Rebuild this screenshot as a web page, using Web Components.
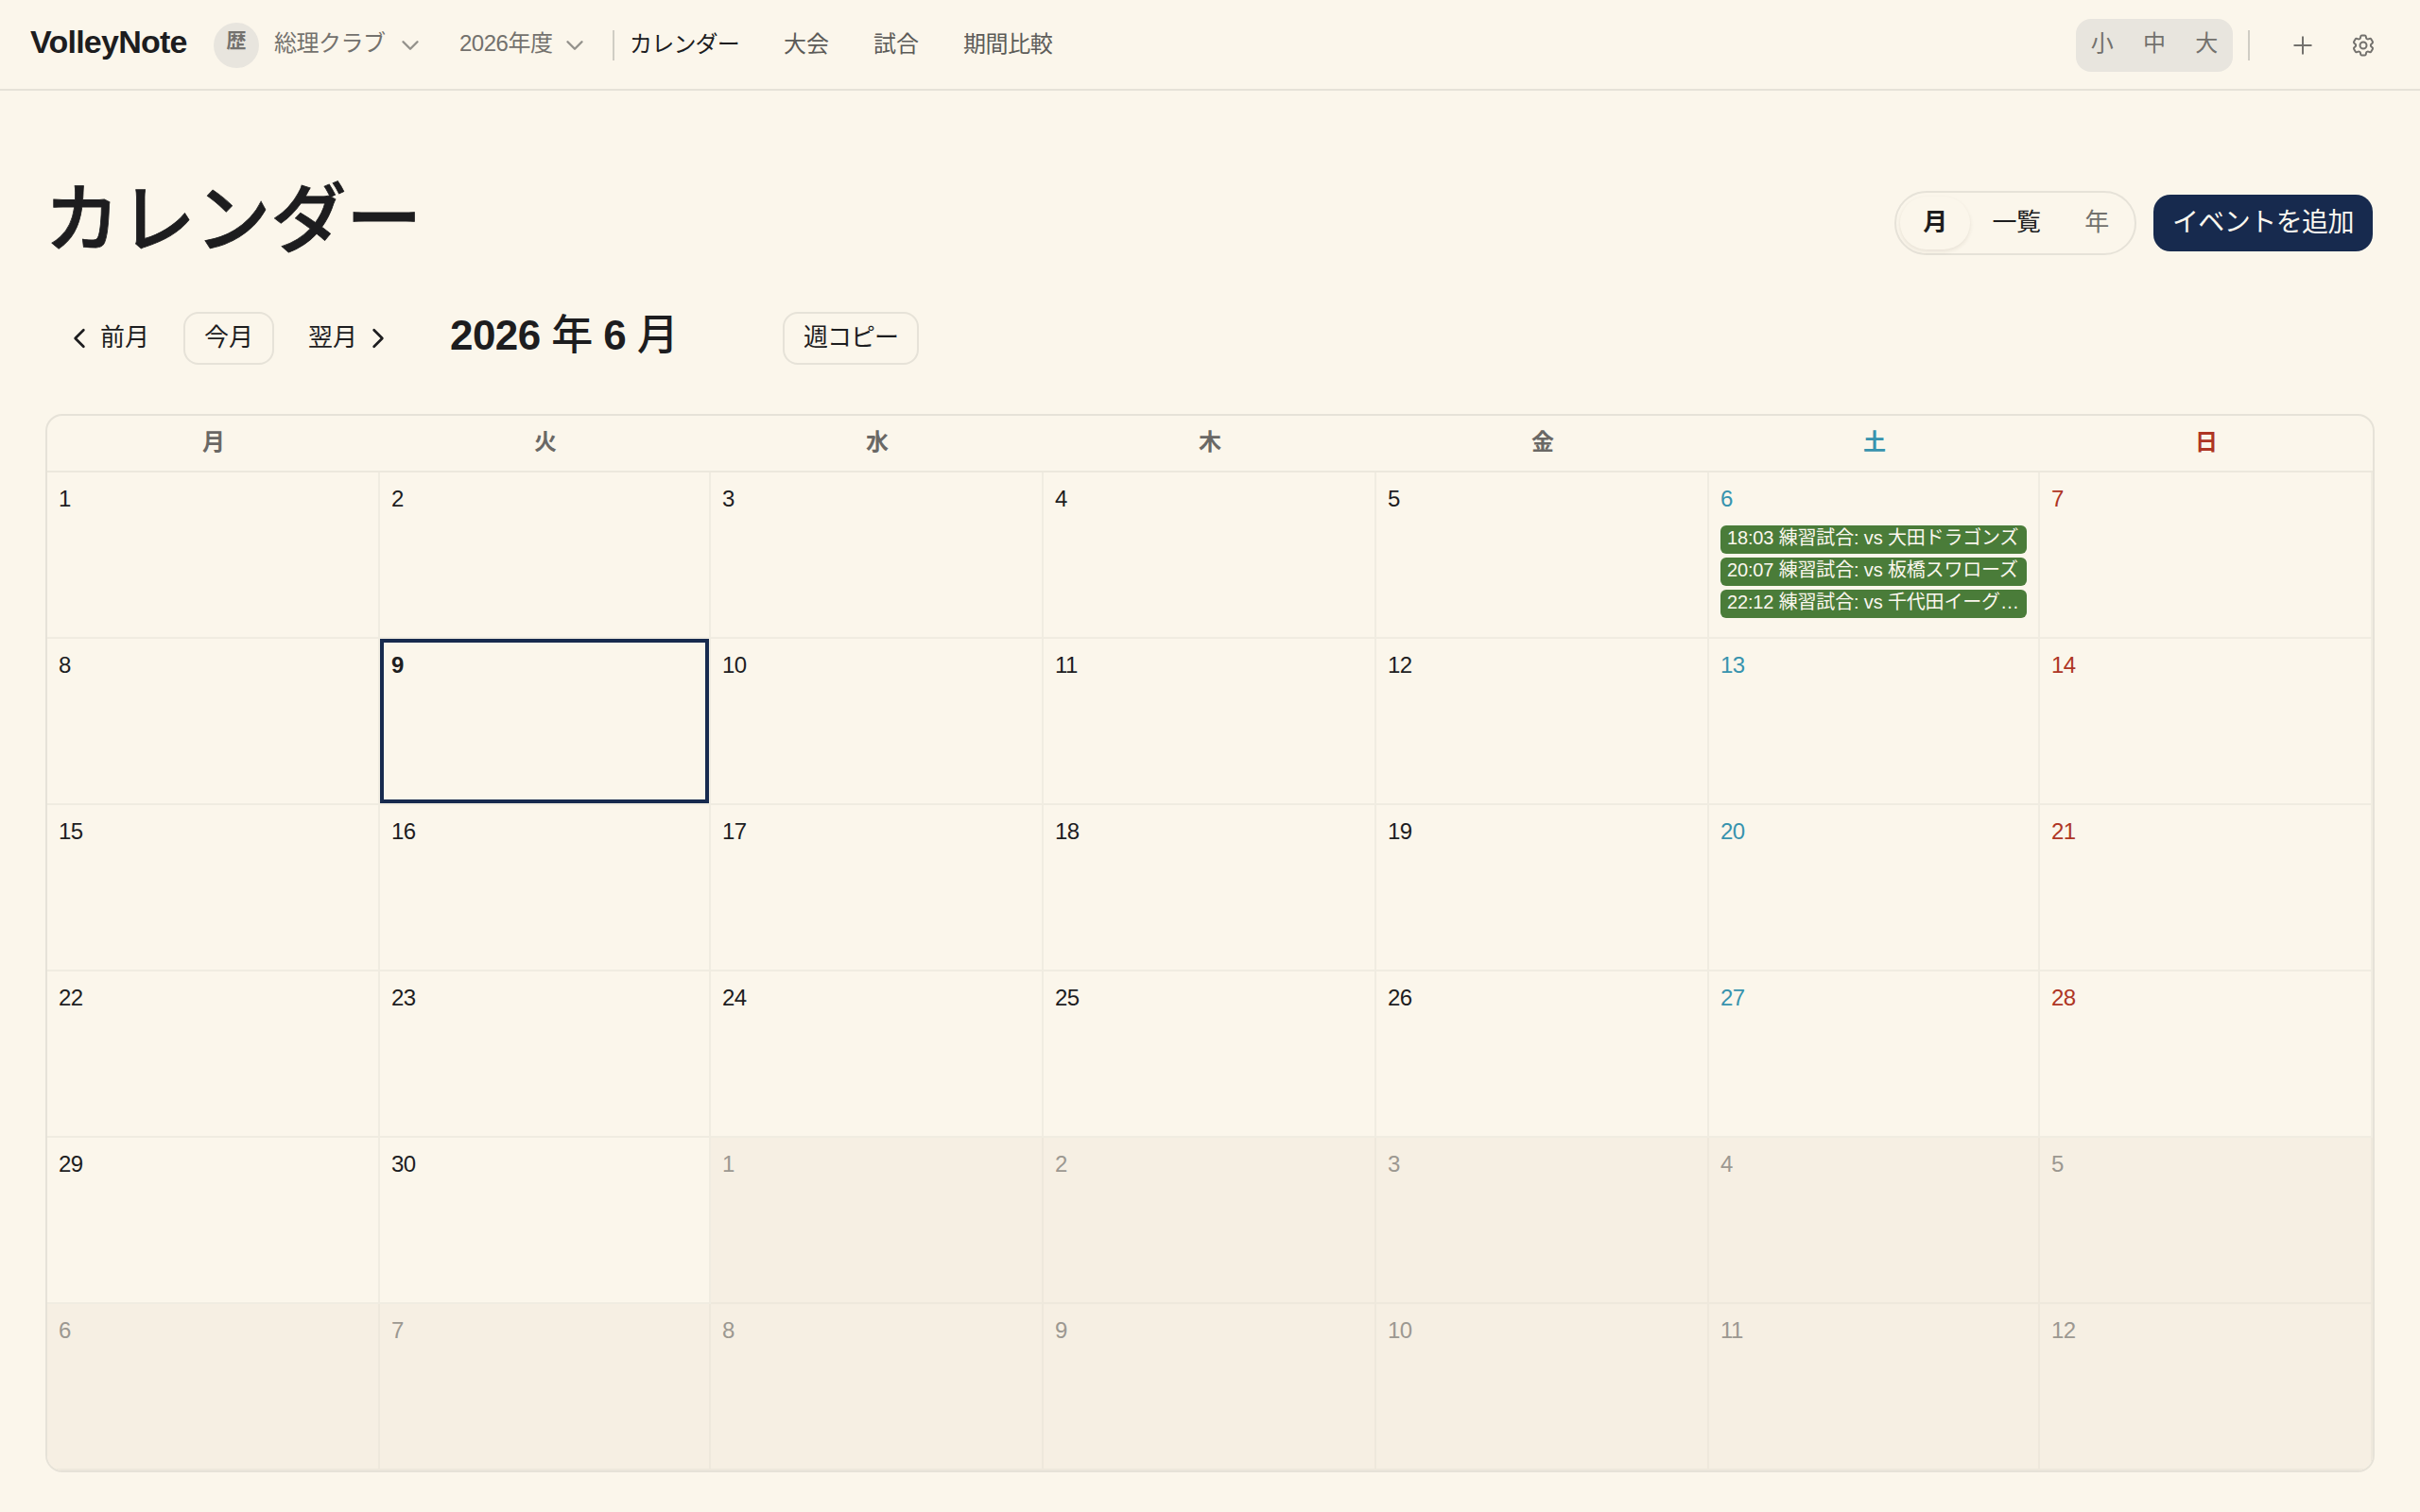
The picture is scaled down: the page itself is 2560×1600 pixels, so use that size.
<!DOCTYPE html>
<html lang="ja">
<head>
<meta charset="utf-8">
<title>VolleyNote</title>
<style>
:root {
  --bg: #fbf6eb;
  --ink: #1d1d1f;
  --ink-soft: #5c5b58;
  --ink-mute: #73716d;
  --line: #e6e2d8;
  --line-soft: #f0ece1;
  --fill: #e8e5de;
  --navy: #172a4e;
  --green: #4a7c39;
  --sat: #3793ae;
  --sun: #ae3524;
}

body {
  margin: 0;
  background: var(--bg);
  color: var(--ink);
  font-family: "Liberation Sans", "Noto Sans CJK JP", sans-serif;
  font-size: 24px;
}
</style>
</head>
<body>
<vn-app></vn-app>

<script>
const icons = {
  down: '<path d="m19.5 8.25-7.5 7.5-7.5-7.5"/>',
  left: '<path d="M15.75 19.5 8.25 12l7.5-7.5"/>',
  right: '<path d="m8.25 4.5 7.5 7.5-7.5 7.5"/>',
  plus: '<path d="M12 4.5v15m7.5-7.5h-15"/>',
  cog: '<path d="M9.594 3.94c.09-.542.56-.94 1.11-.94h2.593c.55 0 1.02.398 1.11.94l.213 1.281c.063.374.313.686.645.87.074.04.147.083.22.127.325.196.72.257 1.075.124l1.217-.456a1.125 1.125 0 0 1 1.37.49l1.296 2.247a1.125 1.125 0 0 1-.26 1.431l-1.003.827c-.293.241-.438.613-.43.992a7.723 7.723 0 0 1 0 .255c-.008.378.137.75.43.991l1.004.827c.424.35.534.955.26 1.43l-1.298 2.247a1.125 1.125 0 0 1-1.369.491l-1.217-.456c-.355-.133-.75-.072-1.076.124a6.47 6.47 0 0 1-.22.128c-.331.183-.581.495-.644.869l-.213 1.281c-.09.543-.56.94-1.11.94h-2.594c-.55 0-1.019-.398-1.11-.94l-.213-1.281c-.062-.374-.312-.686-.644-.87a6.52 6.52 0 0 1-.22-.127c-.325-.196-.72-.257-1.076-.124l-1.217.456a1.125 1.125 0 0 1-1.369-.49l-1.297-2.247a1.125 1.125 0 0 1 .26-1.431l1.004-.827c.292-.24.437-.613.43-.991a6.932 6.932 0 0 1 0-.255c.007-.38-.138-.751-.43-.992l-1.004-.827a1.125 1.125 0 0 1-.26-1.43l1.297-2.247a1.125 1.125 0 0 1 1.37-.491l1.216.456c.356.133.751.072 1.076-.124.072-.044.146-.086.22-.128.332-.183.582-.495.644-.869l.214-1.28Z"/><path d="M15 12a3 3 0 1 1-6 0 3 3 0 0 1 6 0Z"/>',
};

// Small base class: every element renders once into an open shadow root
class VNElement extends HTMLElement {
  connectedCallback() {
    if (this.shadowRoot) return;
    const tpl = document.createElement('template');
    tpl.innerHTML = this.render();
    this.attachShadow({mode: 'open'}).appendChild(tpl.content);
  }
}

customElements.define('vn-icon', class extends VNElement {
  render() {
    const size = this.getAttribute('size') || 24;
    const weight = this.getAttribute('weight') || 1.7;
    return `
<style>
  :host { display: block; flex: none; }
  svg { display: block; }
</style>
<svg width="${size}" height="${size}" viewBox="0 0 24 24" fill="none" stroke="currentColor"
  stroke-width="${weight}" stroke-linecap="round" stroke-linejoin="round">${icons[this.getAttribute('name')]}</svg>`;
  }
});

customElements.define('vn-divider', class extends VNElement {
  render() {
    return `<style>:host { display: block; width: 2px; height: 32px; background: #d0cdc4; }</style>`;
  }
});

customElements.define('vn-button', class extends VNElement {
  render() {
    return `
<style>
  :host {
    display: flex;
    align-items: center;
    gap: 8px;
    box-sizing: border-box;
    height: 56px;
    padding: 0 20px;
    border: 2px solid transparent;
    border-radius: 16px;
    font-size: 26px;
    line-height: 50px;
    white-space: nowrap;
  }
  .label { padding-bottom: 2px; }
  :host([kind=outline]) { border-color: var(--line); }
  :host([kind=primary]) {
    height: 60px;
    border: 0;
    border-radius: 18px;
    background: var(--navy);
    color: #fbf7ee;
    font-size: 28px;
    letter-spacing: -.02em;
  }
  :host([kind=primary]) .label { padding: 0; }
</style>
<slot name="before"></slot><span class="label"><slot></slot></span><slot name="after"></slot>`;
  }
});

customElements.define('vn-header', class extends VNElement {
  render() {
    return `
<style>
  :host {
    display: flex;
    align-items: center;
    height: 92px;
    padding: 2px 46px 0 32px;
    border-bottom: 2px solid var(--line);
    line-height: 1;
    white-space: nowrap;
  }
  .logo { font-size: 34px; font-weight: 700; letter-spacing: -.022em; width: 194px; padding-bottom: 8px; }
  .avatar {
    width: 48px; height: 37px; padding-bottom: 11px;
    border-radius: 50%;
    background: var(--fill);
    color: var(--ink-mute);
    font-size: 21px;
    font-weight: 700;
    display: flex; align-items: center; justify-content: center;
  }
  .pick { display: flex; align-items: center; gap: 12px; color: var(--ink-mute); letter-spacing: -.02em; }
  .pick span { padding-bottom: 4px; width: 98px; }
  .pick vn-icon { color: #94928c; }
  .club { margin: 0 40px 0 16px; }
  .club span { width: 120px; }
  .year { margin-right: 28px; }
  nav { display: flex; gap: 47px; margin-left: 16px; color: var(--ink-soft); padding-bottom: 2px; }
  nav .on { color: var(--ink); letter-spacing: -.8px; }
  nav :last-child { letter-spacing: -.4px; }
  .size {
    display: grid; grid-template-columns: repeat(3, 1fr);
    width: 166px; height: 56px;
    margin-left: auto; margin-right: 16px;
    border-radius: 16px;
    background: var(--fill);
    color: var(--ink-mute);
    text-align: center;
    line-height: 52px;
  }
  .tools { display: flex; gap: 36px; margin-left: 42px; color: var(--ink-mute); }
</style>
<div class="logo">VolleyNote</div>
<div class="avatar">歴</div>
<div class="pick club"><span>総理クラブ</span><vn-icon name="down" weight="2.4"></vn-icon></div>
<div class="pick year"><span>2026年度</span><vn-icon name="down" weight="2.4"></vn-icon></div>
<vn-divider></vn-divider>
<nav><span class="on">カレンダー</span><span>大会</span><span>試合</span><span>期間比較</span></nav>
<div class="size"><span>小</span><span>中</span><span>大</span></div>
<vn-divider></vn-divider>
<div class="tools"><vn-icon name="plus" size="28"></vn-icon><vn-icon name="cog" size="28"></vn-icon></div>`;
  }
});

customElements.define('vn-view-switch', class extends VNElement {
  render() {
    return `
<style>
  :host {
    display: flex;
    box-sizing: border-box;
    width: 256px; height: 68px;
    padding: 4px;
    border: 2px solid var(--line);
    border-radius: 34px;
    font-size: 26px;
    line-height: 54px;
    letter-spacing: -.02em;
    text-align: center;
  }
  span { flex: 0 0 72px; }
  .on { flex-basis: 74px; font-weight: 700; border-radius: 28px; box-shadow: 0 2px 4px rgba(60, 50, 30, .1); }
  .list { flex-basis: 98px; }
  .year { color: var(--ink-mute); }
</style>
<span class="on">月</span><span class="list">一覧</span><span class="year">年</span>`;
  }
});

customElements.define('vn-event', class extends VNElement {
  render() {
    return `
<style>
  :host {
    display: block;
    height: 30px;
    line-height: 26px;
    padding: 0 7px;
    margin-bottom: 4px;
    border-radius: 6px;
    background: var(--green);
    color: #fbf7ee;
    font-size: 20px;
    letter-spacing: -.16px;
    overflow: hidden;
    text-overflow: ellipsis;
    white-space: nowrap;
  }
</style>
<slot></slot>`;
  }
});

customElements.define('vn-day', class extends VNElement {
  render() {
    return `
<style>
  :host {
    display: block;
    box-sizing: border-box;
    padding: 16px 12px 0;
    border-right: 2px solid var(--line-soft);
    border-bottom: 2px solid var(--line-soft);
    min-width: 0;
  }
  :host([sat]) { color: var(--sat); }
  :host([sun]) { color: var(--sun); }
  :host([out]) { background: #f6efe3; color: #9c9891; border-color: #eee8dc; }
  :host([today]) { box-shadow: inset 0 0 0 4px var(--navy); font-weight: 700; }
  .num { line-height: 24px; letter-spacing: -.5px; margin-bottom: 16px; }
</style>
<div class="num">${this.getAttribute('n')}</div>
<slot></slot>`;
  }
});

customElements.define('vn-calendar', class extends VNElement {
  render() {
    const events = ['18:03 練習試合: vs 大田ドラゴンズ', '20:07 練習試合: vs 板橋スワローズ', '22:12 練習試合: vs 千代田イーグ…'];
    let days = '';
    for (let i = 1; i <= 42; i++) {
      const out = i > 30;
      const col = (i - 1) % 7;
      const attrs = [
        out ? 'out' : col === 5 ? 'sat' : col === 6 ? 'sun' : '',
        i === 9 ? 'today' : '',
      ].join(' ');
      const body = i === 6 ? events.map(e => `<vn-event>${e}</vn-event>`).join('') : '';
      days += `<vn-day n="${out ? i - 30 : i}" ${attrs}>${body}</vn-day>`;
    }
    return `
<style>
  :host {
    display: block;
    border: 2px solid var(--line);
    border-radius: 18px;
    overflow: hidden;
  }
  .head, .grid { display: grid; grid-template-columns: 352px 350px 352px 352px 352px 350px 352px; }
  .head {
    height: 58px;
    border-bottom: 2px solid #ece8dd;
    line-height: 55px;
    font-weight: 700;
    text-align: center;
    color: #6a6865;
  }
  .head :nth-child(6) { color: var(--sat); }
  .head :nth-child(7) { color: var(--sun); }
  .grid { grid-auto-rows: 176px; }
</style>
<div class="head">${[...'月火水木金土日'].map(d => `<div>${d}</div>`).join('')}</div>
<div class="grid">${days}</div>`;
  }
});

customElements.define('vn-app', class extends VNElement {
  render() {
    return `
<style>
  :host { display: block; height: 1600px; overflow: hidden; }
  main { padding: 0 48px; }
  .title { display: flex; align-items: center; height: 60px; padding-top: 110px; }
  h1 {
    flex: 1;
    margin: 0 0 0 -1px;
    padding-bottom: 6px;
    font-size: 80px;
    font-weight: 500;
    line-height: 80px;
    letter-spacing: -.2px;
    -webkit-text-stroke: .8px currentColor;
  }
  .actions { display: flex; align-items: center; gap: 18px; margin-right: 2px; }
  .bar { display: flex; align-items: center; gap: 14px; height: 56px; margin: 64px 0 52px; }
  h2 { margin: 0 0 0 26px; padding-bottom: 6px; font-size: 44px; font-weight: 500; line-height: 56px; letter-spacing: -.6px; width: 338px; }
  .copy { letter-spacing: -1px; }
</style>
<vn-header></vn-header>
<main>
  <div class="title">
    <h1>カレンダー</h1>
    <div class="actions"><vn-view-switch></vn-view-switch><vn-button kind="primary">イベントを追加</vn-button></div>
  </div>
  <div class="bar">
    <vn-button><vn-icon slot="before" name="left" size="28" weight="2.3"></vn-icon>前月</vn-button>
    <vn-button kind="outline">今月</vn-button>
    <vn-button>翌月<vn-icon slot="after" name="right" size="28" weight="2.3"></vn-icon></vn-button>
    <h2><b>2026</b> 年 <b>6</b> 月</h2>
    <vn-button kind="outline" class="copy">週コピー</vn-button>
  </div>
  <vn-calendar></vn-calendar>
</main>`;
  }
});
</script>
</body>
</html>
